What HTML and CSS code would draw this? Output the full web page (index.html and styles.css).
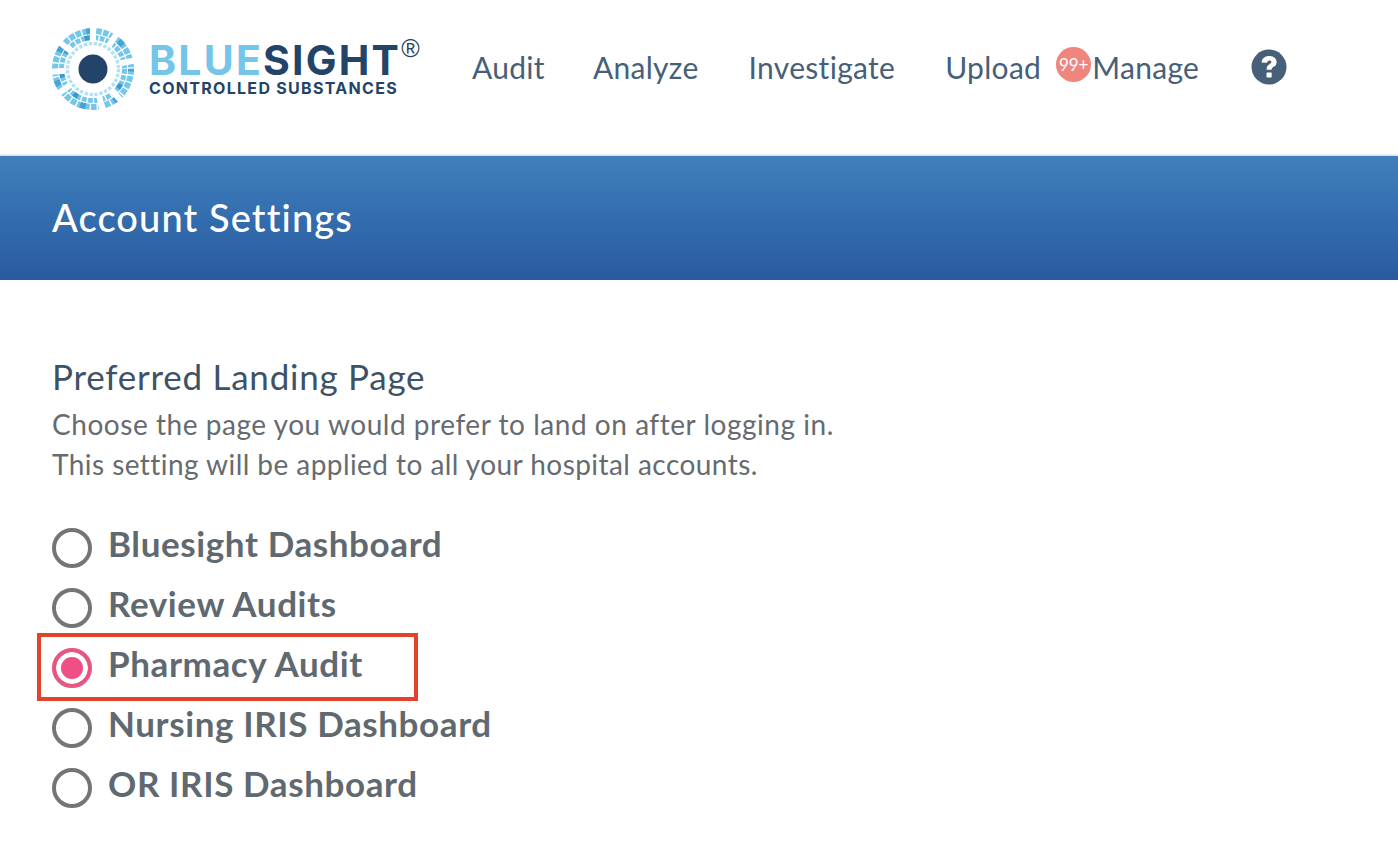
FILE: index.html
```html
<!DOCTYPE html>
<html lang="en">
<head>
    <meta charset="UTF-8">
    <title>Account Settings</title>
    <link rel="stylesheet" href="styles.css">
</head>
<body>
    <header class="topbar">
        <div class="logo">
            <svg class="logo-mark" width="84" height="84" viewBox="0 0 84 84">
                <circle cx="42" cy="42" r="38" fill="none" stroke="#74c6ea" stroke-width="6" stroke-dasharray="5.6 1.4"/>
                <circle cx="42" cy="42" r="38" fill="none" stroke="#45a3d6" stroke-width="6" stroke-dasharray="5.6 29.4" stroke-dashoffset="3"/>
                <circle cx="42" cy="42" r="31.5" fill="none" stroke="#74c6ea" stroke-width="5" stroke-dasharray="4.8 1.4"/>
                <circle cx="42" cy="42" r="31.5" fill="none" stroke="#3a97cf" stroke-width="5" stroke-dasharray="4.8 20" stroke-dashoffset="9"/>
                <g stroke="#fff" stroke-width="6">
                    <path d="M42 42 L42 0"/>
                    <path d="M42 42 L67 5"/>
                    <path d="M42 42 L86 33"/>
                    <path d="M42 42 L72 76"/>
                    <path d="M42 42 L52 86"/>
                    <path d="M42 42 L5 68"/>
                    <path d="M42 42 L-3 45"/>
                    <path d="M42 42 L7 14"/>
                </g>
                <circle cx="42" cy="42" r="27.6" fill="#fff"/>
                <circle cx="42" cy="42" r="25.5" fill="none" stroke="#b2e2f4" stroke-width="3.4" stroke-dasharray="3.4 1.6"/>
                <circle cx="42" cy="42" r="14.5" fill="#234468"/>
            </svg>
            <div class="logo-text">
                <div class="logo-name"><span class="logo-blue">BLUE</span>SIGHT<sup class="logo-reg">®</sup></div>
                <div class="logo-sub">CONTROLLED SUBSTANCES</div>
            </div>
        </div>
        <nav class="mainnav">
            <a href="#">Audit</a>
            <a href="#">Analyze</a>
            <a href="#">Investigate</a>
            <a href="#" class="has-badge">Upload<span class="badge">99+</span></a>
            <a href="#">Manage</a>
        </nav>
        <svg class="help" width="36" height="36" viewBox="0 0 36 36">
            <circle cx="18" cy="18" r="17.5" fill="#475f78"/>
            <path d="M10.6 13.6c.3-4.2 3.3-6.6 7.6-6.6 4.2 0 7.4 2.4 7.4 6 0 2.7-1.4 4-3.2 5.1-1.3.8-1.8 1.3-1.8 2.7h-5c-.1-3 .8-4.3 2.8-5.6 1.3-.8 2-1.4 2-2.2 0-1-.8-1.6-2-1.6-1.4 0-2.2.9-2.4 2.4z" fill="#fff"/>
            <rect x="15.5" y="23.4" width="5.2" height="5" rx=".7" fill="#fff"/>
        </svg>
    </header>

    <div class="band">
        <h1>Account Settings</h1>
    </div>

    <main class="content">
        <h2>Preferred Landing Page</h2>
        <p class="hint">Choose the page you would prefer to land on after logging in.</p>
        <p class="hint">This setting will be applied to all your hospital accounts.</p>

        <div class="options">
            <label class="option"><span class="radio"></span>Bluesight Dashboard</label>
            <label class="option"><span class="radio"></span>Review Audits</label>
            <label class="option selected"><span class="radio"></span>Pharmacy Audit<span class="callout"></span></label>
            <label class="option"><span class="radio"></span>Nursing IRIS Dashboard</label>
            <label class="option"><span class="radio"></span>OR IRIS Dashboard</label>
        </div>
    </main>
</body>
</html>
```

FILE: styles.css
```css
body{
    margin: 0;
    background-color: #fff;
    font-family: "Lato", "Open Sans", sans-serif;
}

.topbar{
    height: 156px;
    box-sizing: border-box;
    padding: 0 0 18px 51px;
    display: flex;
    align-items: center;
}

.logo{
    display: flex;
    align-items: center;
    width: 421px;
    flex: none;
}

.logo-mark{
    flex: none;
}

.logo-text{
    margin-left: 14px;
    font-family: "Inter", sans-serif;
    font-weight: 700;
    color: #234468;
}

.logo-name{
    font-size: 41px;
    letter-spacing: 2.2px;
    line-height: 38px;
    white-space: nowrap;
}

.logo-blue{
    color: #74c5ea;
}

.logo-reg{
    font-family: "Liberation Sans", sans-serif;
    font-size: 25px;
    font-weight: 400;
    letter-spacing: 0;
    line-height: 0;
    vertical-align: 18px;
}

.logo-sub{
    font-size: 16px;
    letter-spacing: 1.3px;
    line-height: 18px;
    white-space: nowrap;
}

.mainnav{
    display: flex;
    flex: none;
    margin-bottom: 4px;
}

.mainnav a{
    color: #475f78;
    font-size: 30px;
    letter-spacing: .3px;
    text-decoration: none;
    margin-right: 50px;
}

.mainnav a:first-child{
    margin-right: 48px;
}

.mainnav a.has-badge{
    position: relative;
    margin-right: 51px;
}

.badge{
    position: absolute;
    left: 111px;
    top: -2px;
    width: 35px;
    height: 35px;
    border-radius: 50%;
    background-color: #f0857e;
    color: #fff;
    font-size: 17px;
    letter-spacing: 0;
    line-height: 35px;
    text-align: center;
}

.help{
    flex: none;
    margin: 0 0 4px 2px;
}

.band{
    height: 124px;
    box-sizing: border-box;
    padding: 0 0 2px 52px;
    display: flex;
    align-items: center;
    background: linear-gradient(#3f7fbc, #285b9f);
    box-shadow: 0 -1px 2px #00000033;
}

h1{
    margin: 0;
    color: #fff;
    font-size: 38px;
    letter-spacing: 1.1px;
    font-weight: 500;
}

.content{
    padding: 76px 0 0 52px;
}

h2{
    margin: 0 0 8px;
    color: #3e5266;
    font-size: 35px;
    letter-spacing: .75px;
    line-height: 40px;
    font-weight: 400;
}

.hint{
    margin: 0;
    color: #666b70;
    font-size: 28px;
    letter-spacing: .54px;
    line-height: 40px;
}

.hint + .hint{
    letter-spacing: .44px;
}

.options{
    margin-top: 29px;
}

.option{
    position: relative;
    height: 60px;
    display: flex;
    align-items: center;
    color: #616970;
    font-size: 35px;
    letter-spacing: .6px;
    font-weight: 700;
}

.radio{
    width: 40px;
    height: 40px;
    box-sizing: border-box;
    margin: 10px 16px 0 0;
    border: 4px solid #757575;
    border-radius: 50%;
    background-color: #fff;
    flex: none;
}

.selected .radio{
    border-color: #e8557f;
    background-color: #ee4f84;
    box-shadow: inset 0 0 0 5px #fff;
}

.callout{
    position: absolute;
    left: -15px;
    top: 0;
    width: 381px;
    height: 68px;
    box-sizing: border-box;
    border: 4px solid #e2432a;
}
```
